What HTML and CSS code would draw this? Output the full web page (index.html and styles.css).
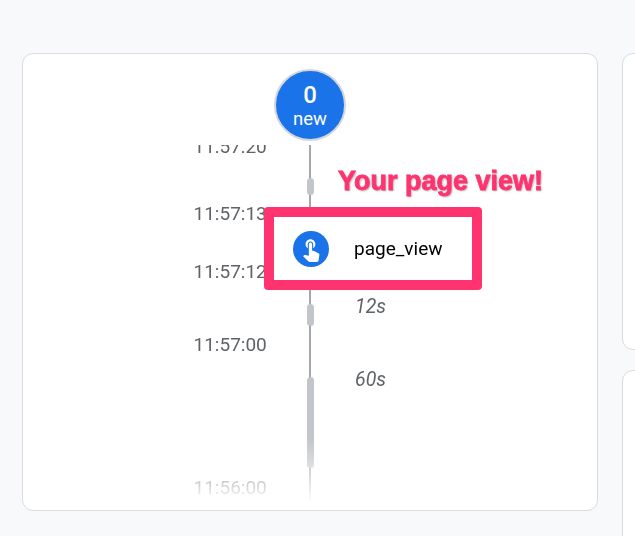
FILE: index.html
```html
<!DOCTYPE html>
<html lang="en">
<head>
<meta charset="utf-8">
<title>Realtime timeline</title>
<link rel="stylesheet" href="styles.css">
</head>
<body>
<main class="page">
  <section class="card card-main">
    <div class="badge"><strong class="badge-count">0</strong><span class="badge-label">new</span></div>
    <div class="timeline">
      <div class="axis"></div>
      <span class="pill pill-a"></span>
      <span class="pill pill-b"></span>
      <span class="pill pill-c"></span>
      <time class="stamp stamp-20">11:57:20</time>
      <time class="stamp stamp-13">11:57:13</time>
      <time class="stamp stamp-12">11:57:12</time>
      <time class="stamp stamp-00">11:57:00</time>
      <time class="stamp stamp-56">11:56:00</time>
      <em class="gap gap-12">12s</em>
      <em class="gap gap-60">60s</em>
      <p class="callout">Your page view!</p>
      <div class="event">
        <span class="event-icon">
          <svg viewBox="0 0 24 24" width="26" height="26" aria-hidden="true"><path fill="#fff" d="M9 11.24V7.5C9 6.12 10.12 5 11.5 5S14 6.12 14 7.5v3.74c1.21-.81 2-2.18 2-3.74C16 5.01 13.99 3 11.5 3S7 5.01 7 7.5c0 1.56.79 2.93 2 3.74zm9.84 4.63l-4.54-2.26c-.17-.07-.35-.11-.54-.11H13v-6c0-.83-.67-1.5-1.5-1.5S10 6.67 10 7.5v10.74l-3.43-.72c-.08-.01-.15-.03-.24-.03-.31 0-.59.13-.79.33l-.79.8 4.94 4.94c.27.27.65.44 1.06.44h6.79c.75 0 1.33-.55 1.44-1.28l.75-5.27c.01-.07.02-.14.02-.2 0-.62-.38-1.16-.91-1.38z"/></svg>
        </span>
        <span class="event-name">page_view</span>
      </div>
    </div>
  </section>
  <div class="side">
    <section class="card card-side-top"></section>
    <section class="card card-side-bottom"></section>
  </div>
</main>
</body>
</html>
```
FILE: styles.css
```css
html, body {
  margin: 0;
  height: 100%;
  overflow: hidden;
  background: #f8f9fa;
}
body {
  font-family: Roboto, "Liberation Sans", sans-serif;
  color: #5f6368;
}
.page {
  display: grid;
  grid-template-columns: 576px 300px;
  gap: 24px;
  padding: 53px 0 0 22px;
}
.card {
  box-sizing: border-box;
  background: #fff;
  border: 1.5px solid #dadce0;
  border-radius: 11px;
}
.card-main {
  height: 458px;
  display: flex;
  flex-direction: column;
  align-items: center;
  padding-top: 15px;
}
.side {
  display: flex;
  flex-direction: column;
  gap: 20px;
}
.card-side-top { height: 297px; }
.card-side-bottom { height: 300px; }
.badge {
  box-sizing: border-box;
  width: 72px;
  height: 72px;
  flex: none;
  display: flex;
  flex-direction: column;
  align-items: center;
  justify-content: center;
  padding-top: 2px;
  border: 2px solid #d3d6da;
  border-radius: 50%;
  background: #1a73e8;
  color: #fff;
}
.badge-count {
  font-size: 24px;
  line-height: 27px;
  font-weight: 500;
}
.badge-label {
  font-size: 18.5px;
  line-height: 21px;
}
.timeline {
  position: relative;
  align-self: stretch;
  height: 358px;
  margin-top: 4px;
  overflow: hidden;
  -webkit-mask-image: linear-gradient(#000 82%, transparent);
  mask-image: linear-gradient(#000 82%, transparent);
}
.axis {
  position: absolute;
  left: 286px;
  top: 0;
  bottom: 0;
  width: 1.5px;
  background: #a4a7ab;
}
.pill {
  position: absolute;
  left: 283.5px;
  width: 7.5px;
  border-radius: 4px;
  background: #c2c5c9;
}
.pill-a { top: 33px; height: 17px; }
.pill-b { top: 159px; height: 22px; }
.pill-c { top: 232px; height: 91px; }
.stamp {
  position: absolute;
  left: 170.5px;
  font-size: 19px;
  line-height: 22px;
  white-space: nowrap;
}
.stamp-20 { top: -9px; }
.stamp-13 { top: 58px; }
.stamp-12 { top: 116px; }
.stamp-00 { top: 189px; }
.stamp-56 { top: 332px; }
.gap {
  position: absolute;
  left: 332px;
  font-size: 19.5px;
  line-height: 22px;
}
.gap-12 { top: 151px; }
.gap-60 { top: 224px; }
.callout {
  position: absolute;
  left: 315px;
  top: 20px;
  margin: 0;
  font-family: "Liberation Sans", Arial, sans-serif;
  font-size: 27px;
  line-height: 32px;
  font-weight: 700;
  white-space: nowrap;
  color: #ff3370;
  -webkit-text-stroke: 0.8px #ff3370;
  text-shadow: 0 0 2px #fff, 1px 1px 2px rgba(0, 0, 0, 0.4), -1px -1px 1px #eee;
}
.event {
  box-sizing: border-box;
  position: absolute;
  left: 241px;
  top: 62px;
  width: 218px;
  height: 83px;
  display: flex;
  align-items: center;
  gap: 25px;
  padding-left: 19px;
  background: #fff;
  border: 10px solid #ff3370;
  border-radius: 4px;
}
.event-icon {
  width: 36px;
  height: 36px;
  flex: none;
  display: flex;
  align-items: center;
  justify-content: center;
  border-radius: 50%;
  background: #1a73e8;
}
.event-name {
  font-size: 19px;
  color: #000;
}
```
